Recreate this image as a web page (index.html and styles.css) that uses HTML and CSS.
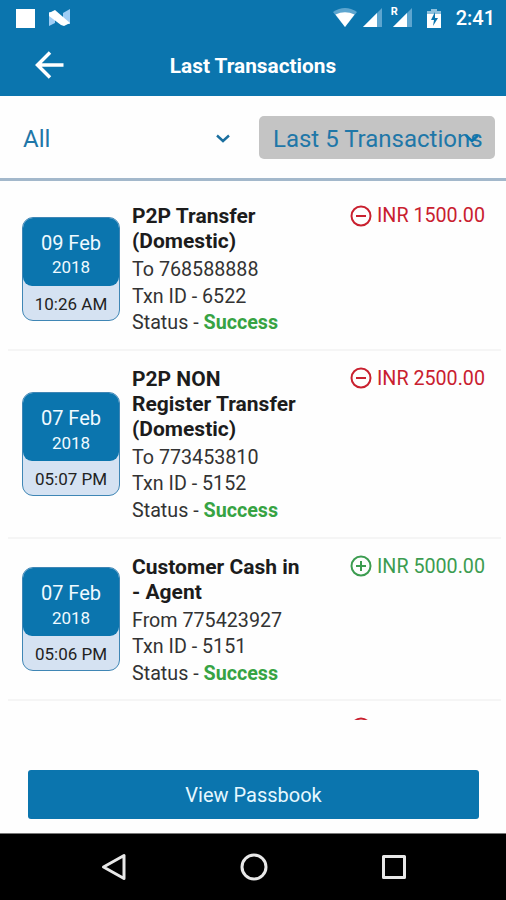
FILE: index.html
```html
<!DOCTYPE html>
<html lang="en">
<head>
    <meta charset="UTF-8">
    <meta name="viewport" content="width=device-width, initial-scale=1.0">
    <title>Last Transactions</title>
    <link rel="stylesheet" href="styles.css">
</head>
<body>
    <div class="app">
        <header class="header">
            <div class="status-bar">
                <div class="status-left">
                    <span class="square"></span>
                    <svg width="22" height="18" viewBox="0 0 22 18">
                        <path d="M0 3H6V14L0 17Z" fill="#9fcdf5"/>
                        <path d="M14 4L21 0V15H14Z" fill="#9fcdf5"/>
                        <path d="M0 4L6 1L21 14L15 17L12 16L0 7Z" fill="#fff"/>
                    </svg>
                </div>
                <div class="status-right">
                    <svg class="wifi" width="24" height="20" viewBox="0 0 24 20">
                        <path d="M0 4Q12 -4 24 4L12 19Z" fill="#5da5cf"/>
                        <path d="M2.500 6.500Q12 2 21.500 6.500L12 19Z" fill="#fff"/>
                    </svg>
                    <svg class="signal" width="20" height="20" viewBox="0 0 20 20">
                        <path d="M0 19L19 0V19Z" fill="#5da5cf"/>
                        <path d="M0 19L14 5V19Z" fill="#fff"/>
                    </svg>
                    <div class="roaming">
                        <span>R</span>
                        <svg class="signal" width="20" height="20" viewBox="0 0 20 20">
                            <path d="M0 19L19 0V19Z" fill="#5da5cf"/>
                            <path d="M0 19L14 5V19Z" fill="#fff"/>
                        </svg>
                    </div>
                    <svg class="battery" width="14" height="19" viewBox="0 0 14 19">
                        <path d="M4 0H10V2H14V6H0V2H4Z" fill="#8fc1de"/>
                        <path d="M0 5H14V19H0Z" fill="#fff"/>
                        <path d="M8 3L4 11H7L6 17L11 9H8Z" fill="#0b75ae"/>
                    </svg>
                    <span class="clock">2:41</span>
                </div>
            </div>
            <div class="title-bar">
                <svg class="back" width="30" height="28" viewBox="0 0 30 28">
                    <path d="M15 1.500L2.500 14L15 26.500M2.500 14H28.500" fill="none" stroke="#fff" stroke-width="3.500"/>
                </svg>
                <h1>Last Transactions</h1>
            </div>
        </header>

        <div class="filters">
            <div class="select">
                <span>All</span>
                <svg class="chevron" width="14" height="9" viewBox="0 0 14 9">
                    <path d="M1 1.500L7 7L13 1.500" fill="none" stroke="#1a6f9f" stroke-width="2.400"/>
                </svg>
            </div>
            <div class="select select-active">
                <span>Last 5 Transactions</span>
                <svg class="chevron" width="14" height="9" viewBox="0 0 14 9">
                    <path d="M1 1.500L7 7L13 1.500" fill="none" stroke="#0b75ae" stroke-width="2.400"/>
                </svg>
            </div>
        </div>

        <div class="list">
            <div class="row">
                <div class="date">
                    <div class="day">09 Feb<small>2018</small></div>
                    <div class="time">10:26 AM</div>
                </div>
                <div class="info">
                    <h2>P2P Transfer (Domestic)</h2>
                    <p>To 768588888</p>
                    <p>Txn ID - 6522</p>
                    <p>Status - <b>Success</b></p>
                </div>
                <div class="amount debit">
                    <svg width="22" height="22" viewBox="0 0 22 22">
                        <path d="M6 11H16" />
                        <circle cx="11" cy="11" r="9.500" />
                    </svg>
                    <span>INR 1500.00</span>
                </div>
            </div>

            <div class="row">
                <div class="date">
                    <div class="day">07 Feb<small>2018</small></div>
                    <div class="time">05:07 PM</div>
                </div>
                <div class="info">
                    <h2>P2P NON<br>Register Transfer (Domestic)</h2>
                    <p>To 773453810</p>
                    <p>Txn ID - 5152</p>
                    <p>Status - <b>Success</b></p>
                </div>
                <div class="amount debit">
                    <svg width="22" height="22" viewBox="0 0 22 22">
                        <path d="M6 11H16" />
                        <circle cx="11" cy="11" r="9.500" />
                    </svg>
                    <span>INR 2500.00</span>
                </div>
            </div>

            <div class="row">
                <div class="date">
                    <div class="day">07 Feb<small>2018</small></div>
                    <div class="time">05:06 PM</div>
                </div>
                <div class="info">
                    <h2>Customer Cash in<br>- Agent</h2>
                    <p>From 775423927</p>
                    <p>Txn ID - 5151</p>
                    <p>Status - <b>Success</b></p>
                </div>
                <div class="amount credit">
                    <svg width="22" height="22" viewBox="0 0 22 22">
                        <path d="M6 11H16M11 6V16" />
                        <circle cx="11" cy="11" r="9.500" />
                    </svg>
                    <span>INR 5000.00</span>
                </div>
            </div>

            <!-- next row, cut off by the list -->
            <div class="row">
                <div class="amount debit">
                    <svg width="22" height="22" viewBox="0 0 22 22">
                        <circle cx="11" cy="11" r="9.500" />
                    </svg>
                </div>
            </div>
        </div>

        <div class="footer">
            <button>View Passbook</button>
        </div>

        <nav class="nav-bar">
            <svg width="28" height="28" viewBox="0 0 28 28">
                <path d="M3.500 14L24 2.500V25.500Z" />
            </svg>
            <svg width="28" height="28" viewBox="0 0 28 28">
                <circle cx="14" cy="14" r="12" />
            </svg>
            <svg width="28" height="28" viewBox="0 0 28 28">
                <rect x="3.500" y="3.500" width="21" height="21" />
            </svg>
        </nav>
    </div>
</body>
</html>
```

FILE: styles.css
```css
* {
    box-sizing: border-box;
}

body {
    margin: 0;
    font-family: Roboto, sans-serif;
    background: #fefefe;
    color: #333;
}

h1, h2, p {
    margin: 0;
}

svg {
    display: block;
    flex-shrink: 0;
}

.app {
    height: 900px;
    display: flex;
    flex-direction: column;
    overflow: hidden;
}

.header {
    height: 96px;
    background: #0b75ae;
    color: #fff;
}

.status-bar {
    height: 36px;
    padding: 0 11px 0 16px;
    display: flex;
    justify-content: space-between;
    align-items: center;
}

.status-left,
.status-right {
    display: flex;
    align-items: center;
}

.status-left {
    gap: 14px;
}

.square {
    width: 19px;
    height: 19px;
    background: #fff;
}

.signal {
    margin-left: 6px;
}

.roaming {
    position: relative;
    margin-left: 4px;
}

.roaming span {
    position: absolute;
    left: 4px;
    top: -2px;
    font-size: 11px;
    line-height: 12px;
    font-weight: 700;
}

.battery {
    margin-left: 14px;
}

.clock {
    margin-left: 15px;
    font-size: 20px;
    font-weight: 500;
    line-height: 36px;
}

.title-bar {
    position: relative;
    height: 60px;
    display: flex;
    align-items: center;
    justify-content: center;
}

.back {
    position: absolute;
    left: 35px;
    top: 15px;
}

h1 {
    font-size: 20.800px;
    font-weight: 700;
    line-height: 62px;
}

.filters {
    height: 85px;
    padding: 20px 11px 0 10px;
    border-bottom: 3px solid #a3b8cb;
    display: flex;
    justify-content: space-between;
}

.select {
    position: relative;
    width: 236px;
    height: 43px;
    padding: 0 13px;
    border-radius: 5px;
    color: #1f77a8;
    font-size: 24px;
    line-height: 46px;
    white-space: nowrap;
}

.select-active {
    padding: 0 14px;
    background: #c4c4c4;
}

.chevron {
    position: absolute;
    right: 16px;
    top: 18px;
}

.list {
    height: 539px;
    padding: 7px 5px 0 8px;
    overflow: hidden;
}

.row {
    display: flex;
    align-items: center;
    padding: 16px 16px 12px 14px;
    border-bottom: 2px solid #f5f5f5;
}

.date {
    width: 98px;
    height: 104px;
    margin-bottom: 3px;
    border: 1px solid #3f86b5;
    border-radius: 11px;
    background: #d5e2f2;
    overflow: hidden;
    text-align: center;
}

.day {
    height: 68px;
    padding-top: 13px;
    border-radius: 0 0 9px 9px;
    background: #0b75ae;
    color: #f0faff;
    font-size: 20px;
    line-height: 24.500px;
}

.day small {
    display: block;
    font-size: 17px;
}

.time {
    color: #222;
    font-size: 17px;
    line-height: 36px;
}

.info {
    width: 180px;
    margin-left: 12px;
}

h2 {
    margin-bottom: 3px;
    color: #1c1c1c;
    font-size: 21px;
    font-weight: 700;
    line-height: 25px;
}

.info p {
    font-size: 19.700px;
    line-height: 26.600px;
}

.info b {
    color: #37a343;
}

.amount {
    align-self: flex-start;
    margin-left: auto;
    display: flex;
    align-items: center;
    gap: 5px;
    height: 23px;
    font-size: 19.700px;
}

.amount svg {
    fill: none;
    stroke: currentColor;
    stroke-width: 2;
}

.debit {
    color: #c9202f;
}

.credit {
    color: #3c9c50;
}

.row:last-child .amount {
    margin-top: -1px;
    margin-right: 113px;
}

.footer {
    flex: 1;
    padding: 50px 27px 0 28px;
}

button {
    width: 100%;
    height: 49px;
    border: none;
    border-radius: 3px;
    background: #0b75ae;
    color: #e6f8ff;
    font-family: inherit;
    font-size: 20px;
}

.nav-bar {
    height: 67px;
    padding-left: 2px;
    background: #000;
    border-top: 1px solid #777;
    display: flex;
    justify-content: center;
    align-items: center;
    gap: 112px;
}

.nav-bar svg {
    fill: none;
    stroke: #e8e8e8;
    stroke-width: 3;
    stroke-linejoin: round;
}
```
